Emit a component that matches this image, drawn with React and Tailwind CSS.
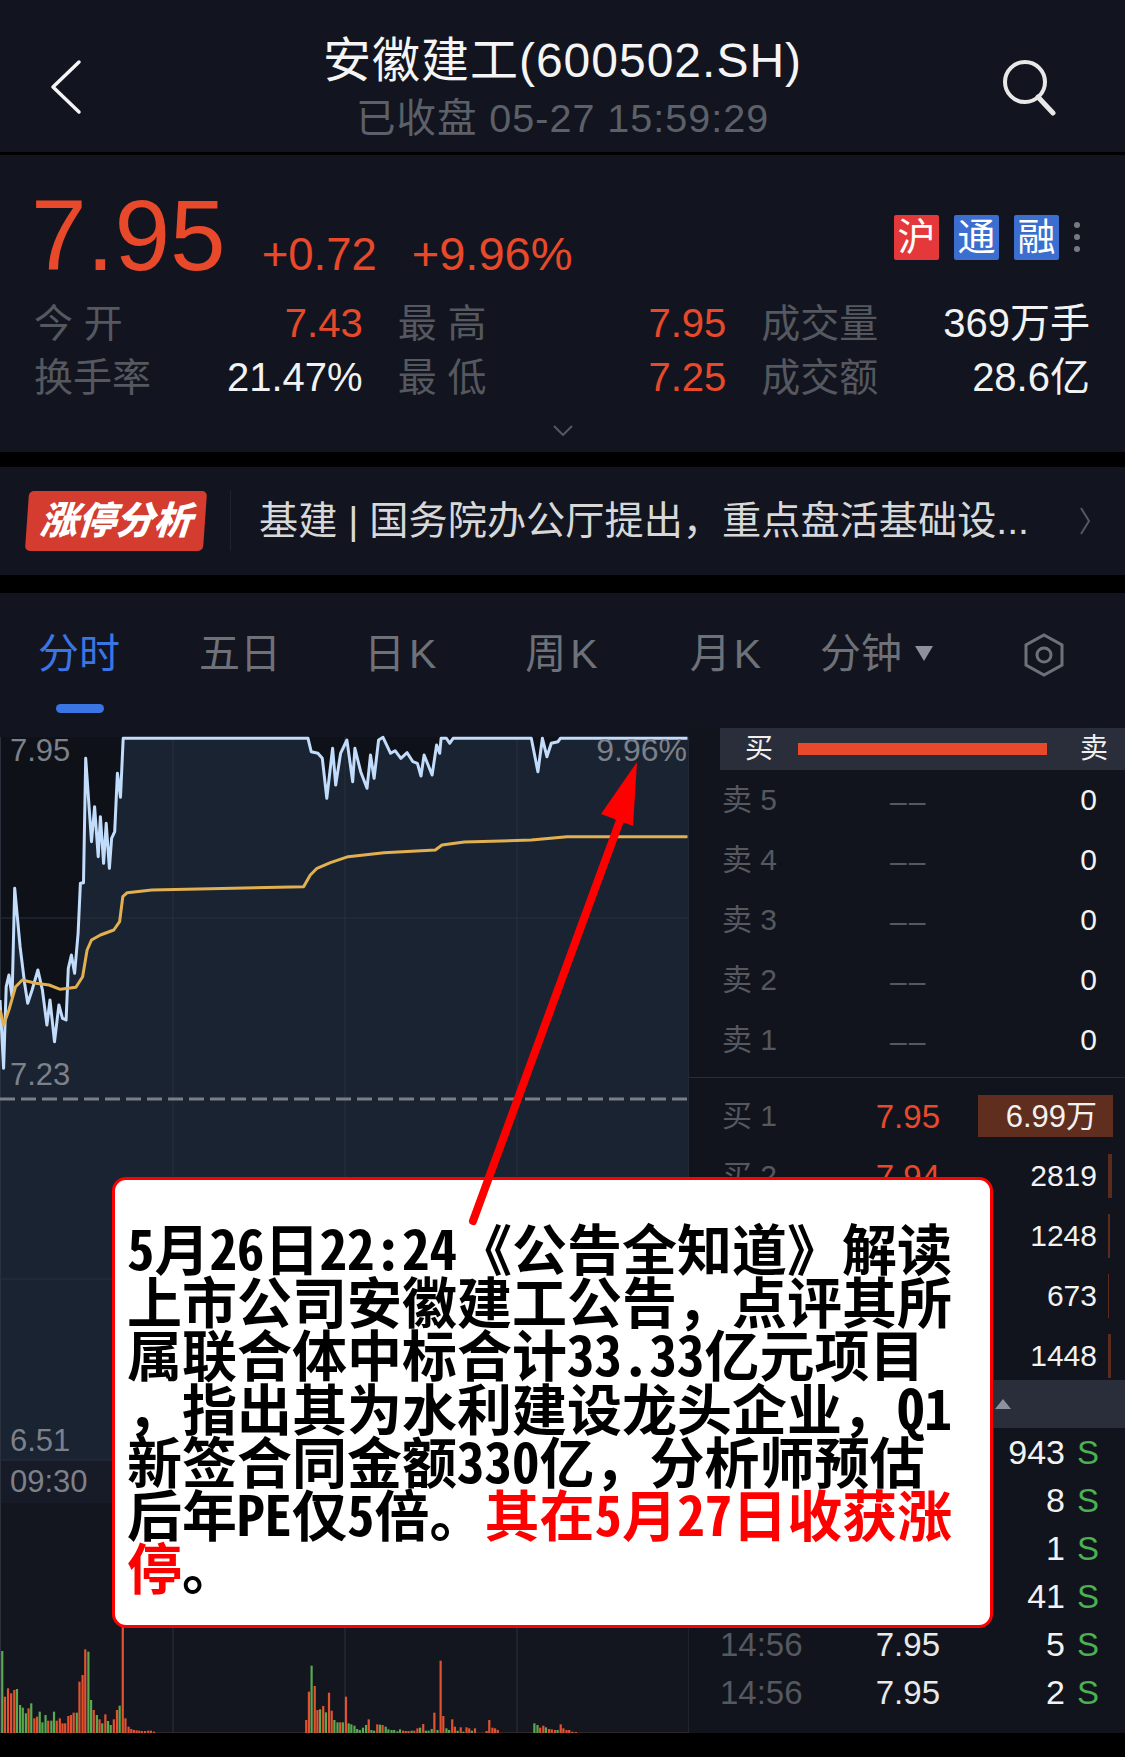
const priceZoom = [
  [0, 840], [8, 1045], [14, 800], [20, 765], [27, 830], [33, 505], [45, 680], [55, 790], [62, 850], [72, 810], [85, 750], [95, 810],
  [105, 915], [112, 840], [122, 965], [132, 855], [140, 895], [148, 900], [153, 745], [160, 705], [167, 760], [175, 640], [180, 490],
  [187, 488], [192, 115], [205, 365], [212, 260], [220, 410], [225, 290], [232, 430], [238, 310], [245, 445], [250, 355], [257, 335],
  [263, 160], [270, 232], [276, 55], [690, 55], [697, 95], [712, 100], [722, 115], [732, 235], [745, 85], [752, 195], [763, 100],
  [777, 60], [790, 185], [795, 85], [808, 155], [822, 205], [830, 105], [838, 175], [848, 60], [858, 52], [875, 100], [885, 92],
  [898, 115], [912, 98], [925, 125], [935, 130], [943, 168], [950, 105], [968, 165], [978, 75], [985, 100], [988, 55], [1000, 55],
  [1007, 70], [1015, 55], [1190, 55], [1205, 155], [1215, 55], [1225, 110], [1235, 70], [1250, 65], [1255, 55], [1540, 55],
];

const avgZoom = [
  [0, 870], [8, 915], [20, 870], [35, 800], [50, 780], [80, 790], [110, 795], [135, 808], [170, 802], [185, 770], [195, 690], [205, 660],
  [225, 645], [255, 630], [268, 605], [275, 530], [285, 518], [340, 510], [680, 500], [695, 465], [710, 445], [740, 428], [780, 410],
  [860, 398], [975, 390], [990, 375], [1040, 366], [1190, 360], [1270, 350], [1540, 350],
];

// x, bar top, colour (r / g), read off the volume panel
const volumes = [
  [5, 273, "g"], [11, 410, "r"], [18, 385, "r"], [25, 400, "r"], [32, 390, "r"], [38, 387, "g"], [45, 435, "g"], [51, 443, "g"], [58, 460, "g"],
  [64, 445, "r"], [70, 430, "g"], [77, 475, "r"], [83, 470, "r"], [89, 455, "g"], [95, 487, "g"], [102, 465, "g"], [108, 482, "r"], [115, 482, "g"],
  [121, 455, "g"], [127, 482, "r"], [134, 475, "r"], [140, 490, "r"], [146, 490, "r"], [153, 468, "r"], [159, 465, "r"], [165, 458, "r"], [172, 458, "g"],
  [178, 365, "r"], [185, 345, "r"], [191, 268, "r"], [198, 275, "g"], [204, 420, "g"], [210, 450, "r"], [217, 465, "g"], [223, 478, "r"], [229, 490, "g"],
  [236, 463, "r"], [242, 483, "g"], [248, 495, "g"], [255, 478, "r"], [262, 450, "r"], [268, 437, "g"], [275, 200, "r"], [281, 475, "r"], [288, 500, "r"],
  [294, 507, "r"], [300, 510, "r"], [306, 511, "r"], [312, 512, "r"], [318, 513, "r"], [325, 513, "r"], [332, 512, "r"], [338, 512, "r"], [345, 515, "r"],
  [686, 480, "r"], [692, 395, "r"], [698, 317, "g"], [705, 378, "r"], [711, 450, "r"], [717, 448, "g"], [724, 438, "r"], [730, 457, "g"], [737, 398, "r"],
  [743, 452, "r"], [749, 480, "g"], [756, 487, "g"], [762, 487, "r"], [768, 487, "g"], [775, 410, "r"], [781, 490, "g"], [787, 493, "g"], [794, 497, "g"],
  [800, 507, "g"], [806, 510, "g"], [813, 503, "g"], [820, 495, "g"], [826, 478, "r"], [832, 510, "g"], [838, 512, "g"], [845, 493, "r"], [851, 494, "g"],
  [857, 495, "r"], [864, 500, "g"], [870, 508, "g"], [877, 510, "g"], [883, 510, "g"], [890, 514, "g"], [896, 508, "g"], [903, 512, "r"], [909, 513, "r"],
  [915, 513, "r"], [922, 512, "g"], [928, 512, "r"], [935, 505, "r"], [941, 503, "g"], [948, 492, "r"], [954, 512, "g"], [960, 512, "g"], [967, 507, "g"],
  [973, 458, "r"], [980, 510, "g"], [987, 302, "r"], [993, 468, "r"], [1000, 505, "g"], [1006, 510, "g"], [1013, 478, "r"], [1019, 500, "r"], [1025, 512, "g"],
  [1032, 502, "r"], [1038, 515, "g"], [1045, 502, "r"], [1051, 505, "r"], [1057, 512, "g"], [1064, 505, "r"], [1090, 513, "r"], [1096, 480, "r"], [1103, 503, "r"],
  [1109, 505, "r"], [1115, 510, "r"], [1197, 490, "g"], [1204, 495, "g"], [1210, 503, "r"], [1217, 497, "r"], [1223, 502, "g"], [1230, 507, "r"], [1236, 508, "r"],
  [1243, 510, "r"], [1249, 510, "g"], [1256, 493, "r"], [1262, 505, "r"], [1269, 510, "r"], [1275, 510, "r"], [1282, 515, "r"], [1290, 516, "r"],
];

const toPage = ([x, y]) => [x / 2.24, 720 + y / 3];
const pts = (list) => list.map((p) => toPage(p).map((n) => n.toFixed(1)).join(",")).join(" ");

const sellRows = ["5", "4", "3", "2", "1"];
// rows 3-5 and the first trades sit behind the callout, so only the part that shows is filled in
const buyRows = [
  { label: "买 1", price: "7.95", vol: "6.99万", box: true },
  { label: "买 2", price: "7.94", vol: "2819", bar: 4 },
  { vol: "1248", bar: 2 },
  { vol: "673", bar: 1 },
  { vol: "1448", bar: 3 },
];
const trades = [
  { vol: "943" },
  { vol: "8" },
  { vol: "1" },
  { vol: "41" },
  { time: "14:56", price: "7.95", vol: "5" },
  { time: "14:56", price: "7.95", vol: "2" },
];

function Stat({ label, value, red }) {
  return (
    <div className="flex items-center justify-between">
      <span className="-ml-[1px] text-[39px] text-[#55585f]">{label}</span>
      <span className={`text-[40px] ${red ? "text-[#e8492a]" : "text-[#f2f2f2]"}`}>{value}</span>
    </div>
  );
}

function Badge({ color, children }) {
  return (
    <span className={`flex h-[45px] w-[45px] items-center justify-center rounded-[2px] text-[38px] leading-none text-white ${color}`}>
      {children}
    </span>
  );
}

function PriceChart() {
  const line = pts(priceZoom);
  return (
    <div className="relative h-[1005px] w-[689px] text-[31px] leading-none text-[#7d818a]">
      <svg viewBox="0 728 689 1005" className="block h-[1005px] w-[689px]">
        <rect x="0" y="728" width="689" height="9" fill="#12151f" />
        <rect x="0" y="737" width="689" height="723" fill="#0f1119" />
        <polygon points={`0,1460 ${line} 689,738 689,1460`} fill="#1a2331" />
        <rect x="0" y="1460" width="689" height="43" fill="#161b27" />
        <rect x="0" y="1503" width="689" height="230" fill="#13161f" />
        {[0.5, 173, 345, 517, 689].map((x) => (
          <line key={x} x1={x} x2={x} y1="737" y2="1733" stroke="#2a303c" strokeWidth="1" />
        ))}
        <line x1="0" x2="689" y1="918" y2="918" stroke="#2a303c" />
        <line x1="0" x2="689" y1="1279" y2="1279" stroke="#2a303c" />
        <line x1="0" x2="689" y1="1460" y2="1460" stroke="#2a303c" />
        <line x1="0" x2="689" y1="1099" y2="1099" stroke="#7b7f85" strokeWidth="3" strokeDasharray="15 6" />
        <polyline points={line} fill="none" stroke="#c2dcfb" strokeWidth="3" strokeLinejoin="round" />
        <polyline points={pts(avgZoom)} fill="none" stroke="#e2b050" strokeWidth="3" strokeLinejoin="round" />
        <line x1="0" x2="689" y1="1733" y2="1733" stroke="#4a3a30" />
        {volumes.map(([x, top, c]) => (
          <rect
            key={x}
            x={x / 2.24 - 1.1}
            y={1560 + top / 3}
            width="2.2"
            height={1733 - (1560 + top / 3)}
            fill={c === "r" ? "#e2522f" : "#5aa84f"}
          />
        ))}
      </svg>
      <span className="absolute top-[7px] left-[10px]">7.95</span>
      <span className="absolute top-[6px] right-[2px] text-[32px]">9.96%</span>
      <span className="absolute top-[331px] left-[10px]">7.23</span>
      <span className="absolute top-[697px] left-[10px]">6.51</span>
      <span className="absolute top-[738px] left-[10px]">09:30</span>
    </div>
  );
}

function OrderBook() {
  return (
    <div className="flex h-[1005px] flex-1 flex-col overflow-hidden bg-[#11141d] text-[30px] leading-none">
      <div className="ml-[31px] flex h-[42px] shrink-0 items-center bg-[#2a2d3a] text-[28px] text-[#f0f0f0]">
        <span className="ml-[25px] w-[28px]">买</span>
        <span className="ml-[25px] h-[12px] w-[249px] bg-[#e8492a]" />
        <span className="ml-[33px]">卖</span>
      </div>
      {sellRows.map((n) => (
        <div key={n} className="ml-[33px] flex h-[60px] shrink-0 items-center">
          <span className="w-[168px] text-[#55585f]">卖 {n}</span>
          <span className="mt-[3px] w-[70px] tracking-[2px] text-[#55585f]">––</span>
          <span className="w-[137px] text-right text-[#f2f2f2]">0</span>
        </div>
      ))}
      <div className="mt-[7px] h-px shrink-0 bg-[#2a2d36]" />
      <div className="pt-[8px]">
        {buyRows.map((r) => (
          <div key={r.vol} className="relative ml-[33px] flex h-[60px] items-center">
            <span className="w-[153px] text-[#55585f]">{r.label}</span>
            <span className="w-[65px] text-right text-[33px] text-[#e8492a]">{r.price}</span>
            {r.box && <span className="absolute top-[9px] right-[12px] h-[42px] w-[135px] bg-[#5f2e1f]" />}
            <span className={`relative w-[157px] text-right text-[#f2f2f2] ${r.box ? "text-[31px]" : ""}`}>{r.vol}</span>
            {r.bar && <span className="absolute top-[8px] left-[386px] h-[44px] bg-[#5b2c1e]" style={{ width: r.bar }} />}
          </div>
        ))}
      </div>
      <div className="mt-[-6px] flex h-[48px] shrink-0 items-center bg-[#2a2d3a] pl-[306px]">
        <span className="h-0 w-0 border-x-[8px] border-b-[10px] border-x-transparent border-b-[#8e919c]" />
      </div>
      {trades.map((t) => (
        <div key={t.vol} className="ml-[31px] flex h-[48px] shrink-0 items-center text-[33px]">
          <span className="w-[100px] text-[#55585f]">{t.time}</span>
          <span className="w-[120px] text-right text-[#e9e9e9]">{t.price}</span>
          <span className="w-[125px] text-right text-[34px] text-[#f2f2f2]">{t.vol}</span>
          <span className="ml-[12px] text-[#4caf50]">S</span>
        </div>
      ))}
    </div>
  );
}

function Latin({ children }) {
  return <span className="[font-feature-settings:'hwid']">{children}</span>;
}

function Callout() {
  return (
    <div className="absolute top-[1177px] left-[112px] h-[451px] w-[881px] rounded-[14px] border-[3px] border-[#ff0000] bg-white pt-[40px] pl-[12px] font-bold text-[55px] leading-[53.2px] whitespace-nowrap text-black [font-family:'Noto_Sans_CJK_SC',sans-serif]">
      <div><Latin>5</Latin>月<Latin>26</Latin>日<Latin>22:24</Latin>《公告全知道》解读</div>
      <div>上市公司安徽建工公告，点评其所</div>
      <div>属联合体中标合计<Latin>33.33</Latin>亿元项目</div>
      <div>，指出其为水利建设龙头企业，<Latin>Q1</Latin></div>
      <div>新签合同金额<Latin>330</Latin>亿，分析师预估</div>
      <div>后年<Latin>PE</Latin>仅<Latin>5</Latin>倍。<span className="text-[#ff0000]">其在<Latin>5</Latin>月<Latin>27</Latin>日收获涨</span></div>
      <div><span className="text-[#ff0000]">停</span>。</div>
    </div>
  );
}

export default function App() {
  return (
    <div className="relative h-[1757px] w-[1125px] overflow-hidden bg-black [font-family:'Liberation_Sans','Noto_Sans_CJK_SC',sans-serif]">
      <header className="grid h-[152px] grid-cols-[1fr_auto_1fr] items-center bg-[#12151f]">
        <div className="pl-[50px]">
          <svg width="32" height="56" viewBox="0 0 32 56" fill="none" stroke="#f5f5f5" strokeWidth="3.5" strokeLinecap="round" strokeLinejoin="round" className="mt-[22px]">
            <path d="M29 3 L3 28 L29 53" />
          </svg>
        </div>
        <div className="flex flex-col items-center pt-[20px]">
          <h1 className="text-[48px] leading-[56px] tracking-[1px] text-[#f5f5f5]">安徽建工(600502.SH)</h1>
          <p className="mt-[7px] text-[39.5px] leading-[44px] tracking-[1px] text-[#5c6068]">已收盘 05-27 15:59:29</p>
        </div>
        <div className="flex justify-end pr-[66px]">
          <svg width="58" height="58" viewBox="0 0 58 58" fill="none" stroke="#e8e8e8" strokeWidth="4" strokeLinecap="round" className="mt-[22px]">
            <circle cx="24" cy="24" r="20" />
            <path d="M37 39 L52 55" strokeWidth="5" />
          </svg>
        </div>
      </header>

      <section className="mt-[3px] h-[297px] bg-[#12151f] pt-[32px] text-[38px] leading-none">
        <div className="flex items-center justify-between pr-[45px] pl-[31px]">
          <div className="flex items-baseline text-[#e8492a]">
            <span className="text-[100px] leading-[96px]">7.95</span>
            <span className="ml-[36px] text-[45.5px] leading-none">+0.72</span>
            <span className="ml-[35px] text-[47px] leading-none">+9.96%</span>
          </div>
          <div className="mt-[4px] flex items-center gap-[15px]">
            <Badge color="bg-[#e5383b]">沪</Badge>
            <Badge color="bg-[#3c6ed0]">通</Badge>
            <Badge color="bg-[#3c6ed0]">融</Badge>
            <span className="flex flex-col gap-[6px]">
              <span className="h-[6px] w-[6px] rounded-full bg-[#777a80]" />
              <span className="h-[6px] w-[6px] rounded-full bg-[#777a80]" />
              <span className="h-[6px] w-[6px] rounded-full bg-[#777a80]" />
            </span>
          </div>
        </div>
        <div className="mt-[20px] grid grid-cols-3 gap-x-[36px] gap-y-[14px] px-[35px]">
          <Stat label="今 开" value="7.43" red />
          <Stat label="最 高" value="7.95" red />
          <Stat label="成交量" value="369万手" />
          <Stat label="换手率" value="21.47%" />
          <Stat label="最 低" value="7.25" red />
          <Stat label="成交额" value="28.6亿" />
        </div>
        <div className="mt-[28px] flex justify-center">
          <svg width="20" height="11" viewBox="0 0 20 11" fill="none" stroke="#55585f" strokeWidth="2">
            <path d="M1 1 L10 10 L19 1" />
          </svg>
        </div>
      </section>

      <section className="mt-[15px] flex h-[108px] items-center bg-[#12151f]">
        <div className="ml-[27px] flex h-[60px] w-[178px] -skew-x-[4deg] items-center justify-center rounded-[5px] bg-[#d33c2f] text-[38px] leading-none font-black text-white italic">
          涨停分析
        </div>
        <span className="ml-[25px] h-[60px] w-px bg-[#20242e]" />
        <p className="ml-[28px] w-[790px] text-[39.2px] leading-none whitespace-nowrap text-[#d8d8d8]">基建 | 国务院办公厅提出，重点盘活基础设...</p>
        <svg width="10" height="28" viewBox="0 0 10 28" fill="none" stroke="#55585f" strokeWidth="2" className="ml-[31px]">
          <path d="M1 1 L9 14 L1 27" />
        </svg>
      </section>

      <section className="relative mt-[18px] flex h-[135px] items-start bg-[#12151f] pt-[40px] text-[41px] leading-[42px] text-[#6e7178]">
        <span className="ml-[38px] text-[#3b74e3]">分时</span>
        <span className="ml-[79px]">五日</span>
        <span className="ml-[83px] tracking-[4px]">日K</span>
        <span className="ml-[85px] tracking-[4px]">周K</span>
        <span className="ml-[88px] tracking-[3px]">月K</span>
        <span className="ml-[56px]">分钟</span>
        <span className="mt-[13px] ml-[13px] h-0 w-0 border-x-[9px] border-t-[15px] border-x-transparent border-t-[#8e919c]" />
        <svg width="40" height="44" viewBox="0 0 40 44" fill="none" stroke="#6e7178" strokeWidth="3" className="ml-[91px]">
          <path d="M20 2 L38 12 V32 L20 42 L2 32 V12 Z" />
          <circle cx="20" cy="22" r="7" />
        </svg>
        <span className="absolute top-[111px] left-[56px] h-[9px] w-[48px] rounded-full bg-[#3b74e3]" />
      </section>

      <section className="flex">
        <PriceChart />
        <OrderBook />
      </section>

      <Callout />

      <svg viewBox="0 0 1125 1757" className="pointer-events-none absolute inset-0 h-[1757px] w-[1125px]">
        <line x1="473" y1="1221" x2="622" y2="815" stroke="#ff0000" strokeWidth="8" strokeLinecap="round" />
        <polygon points="637,762 601,814 633,826" fill="#ff0000" />
      </svg>
    </div>
  );
}
